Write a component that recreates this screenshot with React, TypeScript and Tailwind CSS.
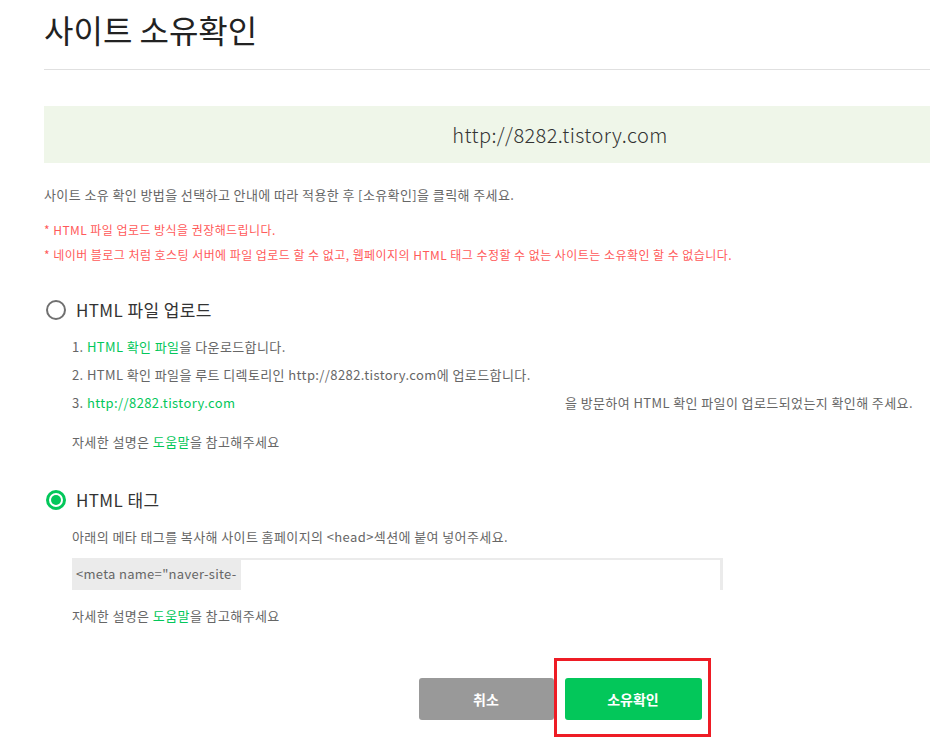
import { useState } from 'react'

const font = { fontFamily: '"Noto Sans CJK KR", "Noto Sans", sans-serif' }

function Radio({ checked, label, onClick }: { checked: boolean; label: string; onClick: () => void }) {
  return (
    <button onClick={onClick} className="flex items-center h-[30px] gap-[10px] pl-[2px]">
      {checked ? (
        <span className="w-[20px] h-[20px] rounded-full border-[3px] border-[#03c75a] flex items-center justify-center">
          <span className="w-[10px] h-[10px] rounded-full bg-[#03c75a]" />
        </span>
      ) : (
        <span className="w-[20px] h-[20px] rounded-full border-2 border-[#707070]" />
      )}
      <span className="text-[17px] text-[#333] tracking-[0.4px]">{label}</span>
    </button>
  )
}

function HelpLine() {
  return (
    <p className="text-[13px] leading-[20px] text-[#666] tracking-[0.4px]">
      자세한 설명은 <span className="text-[#03c75a]">도움말</span>을 참고해주세요
    </p>
  )
}

export default function App() {
  const [method, setMethod] = useState<'file' | 'tag'>('tag')

  return (
    <div className="w-[930px] h-[749px] overflow-hidden bg-white" style={font}>
      <div className="w-[1032px] ml-[44px]">
        {/* Title */}
        <div className="h-[70px] border-b border-[#e0e0e0] pt-[9px]">
          <h1 className="text-[32px] leading-[40px] text-[#222] font-normal">사이트 소유확인</h1>
        </div>

        {/* Site url */}
        <div className="mt-[36px] h-[57px] bg-[#eff6e9] flex items-center justify-center">
          <span className="text-[20px] font-light text-[#333] tracking-[0.4px]">http://8282.tistory.com</span>
        </div>

        <p className="mt-[22px] text-[13px] leading-[20px] text-[#666] tracking-[0.4px]">
          사이트 소유 확인 방법을 선택하고 안내에 따라 적용한 후 [소유확인]을 클릭해 주세요.
        </p>
        <div className="mt-[12px] text-[12px] leading-[25px] text-[#ff5a5a] tracking-[0.45px]">
          <p>* HTML 파일 업로드 방식을 권장해드립니다.</p>
          <p>* 네이버 블로그 처럼 호스팅 서버에 파일 업로드 할 수 없고, 웹페이지의 HTML 태그 수정할 수 없는 사이트는 소유확인 할 수 없습니다.</p>
        </div>

        {/* HTML file upload */}
        <div className="mt-[28px]">
          <Radio checked={method === 'file'} label="HTML 파일 업로드" onClick={() => setMethod('file')} />
        </div>
        <div className="pl-[28px]">
          <ol className="mt-[8px] text-[13px] leading-[28px] text-[#666] tracking-[0.4px]">
            <li>
              1. <span className="text-[#03c75a]">HTML 확인 파일</span>을 다운로드합니다.
            </li>
            <li>2. HTML 확인 파일을 루트 디렉토리인 http://8282.tistory.com에 업로드합니다.</li>
            <li>
              3. <span className="inline-block w-[478px] text-[#03c75a]">http://8282.tistory.com</span>을 방문하여 HTML 확인 파일이 업로드되었는지 확인해 주세요.
            </li>
          </ol>
          <div className="mt-[15px]">
            <HelpLine />
          </div>
        </div>

        {/* HTML tag */}
        <div className="mt-[33px]">
          <Radio checked={method === 'tag'} label="HTML 태그" onClick={() => setMethod('tag')} />
        </div>
        <div className="pl-[28px]">
          <p className="mt-[12px] text-[13px] leading-[20px] text-[#666] tracking-[0.4px]">
            아래의 메타 태그를 복사해 사이트 홈페이지의 &lt;head&gt;섹션에 붙여 넣어주세요.
          </p>
          <div className="mt-[11px] w-[651px] h-[32px] flex border-t-2 border-r-[3px] border-[#ebebeb]">
            <span className="w-[169px] bg-[#ebebeb] flex items-center pl-[4px] text-[13px] text-[#666] tracking-[0.3px] -mt-[2px] h-[32px]">
              &lt;meta name="naver-site-
            </span>
          </div>
          <div className="mt-[16px]">
            <HelpLine />
          </div>
        </div>

        {/* Buttons */}
        <div className="mt-[52px] flex justify-center gap-[11px]">
          <button className="w-[135px] h-[42px] rounded-[3px] bg-[#999] text-white text-[14px] font-bold">취소</button>
          <div className="relative">
            <button className="w-[137px] h-[42px] rounded-[3px] bg-[#03c75a] text-white text-[14px] font-bold">소유확인</button>
            <div className="absolute -top-[20px] -left-[11px] -right-[9px] -bottom-[17px] border-[3px] border-[#ee1c25] pointer-events-none" />
          </div>
        </div>
      </div>
    </div>
  )
}
